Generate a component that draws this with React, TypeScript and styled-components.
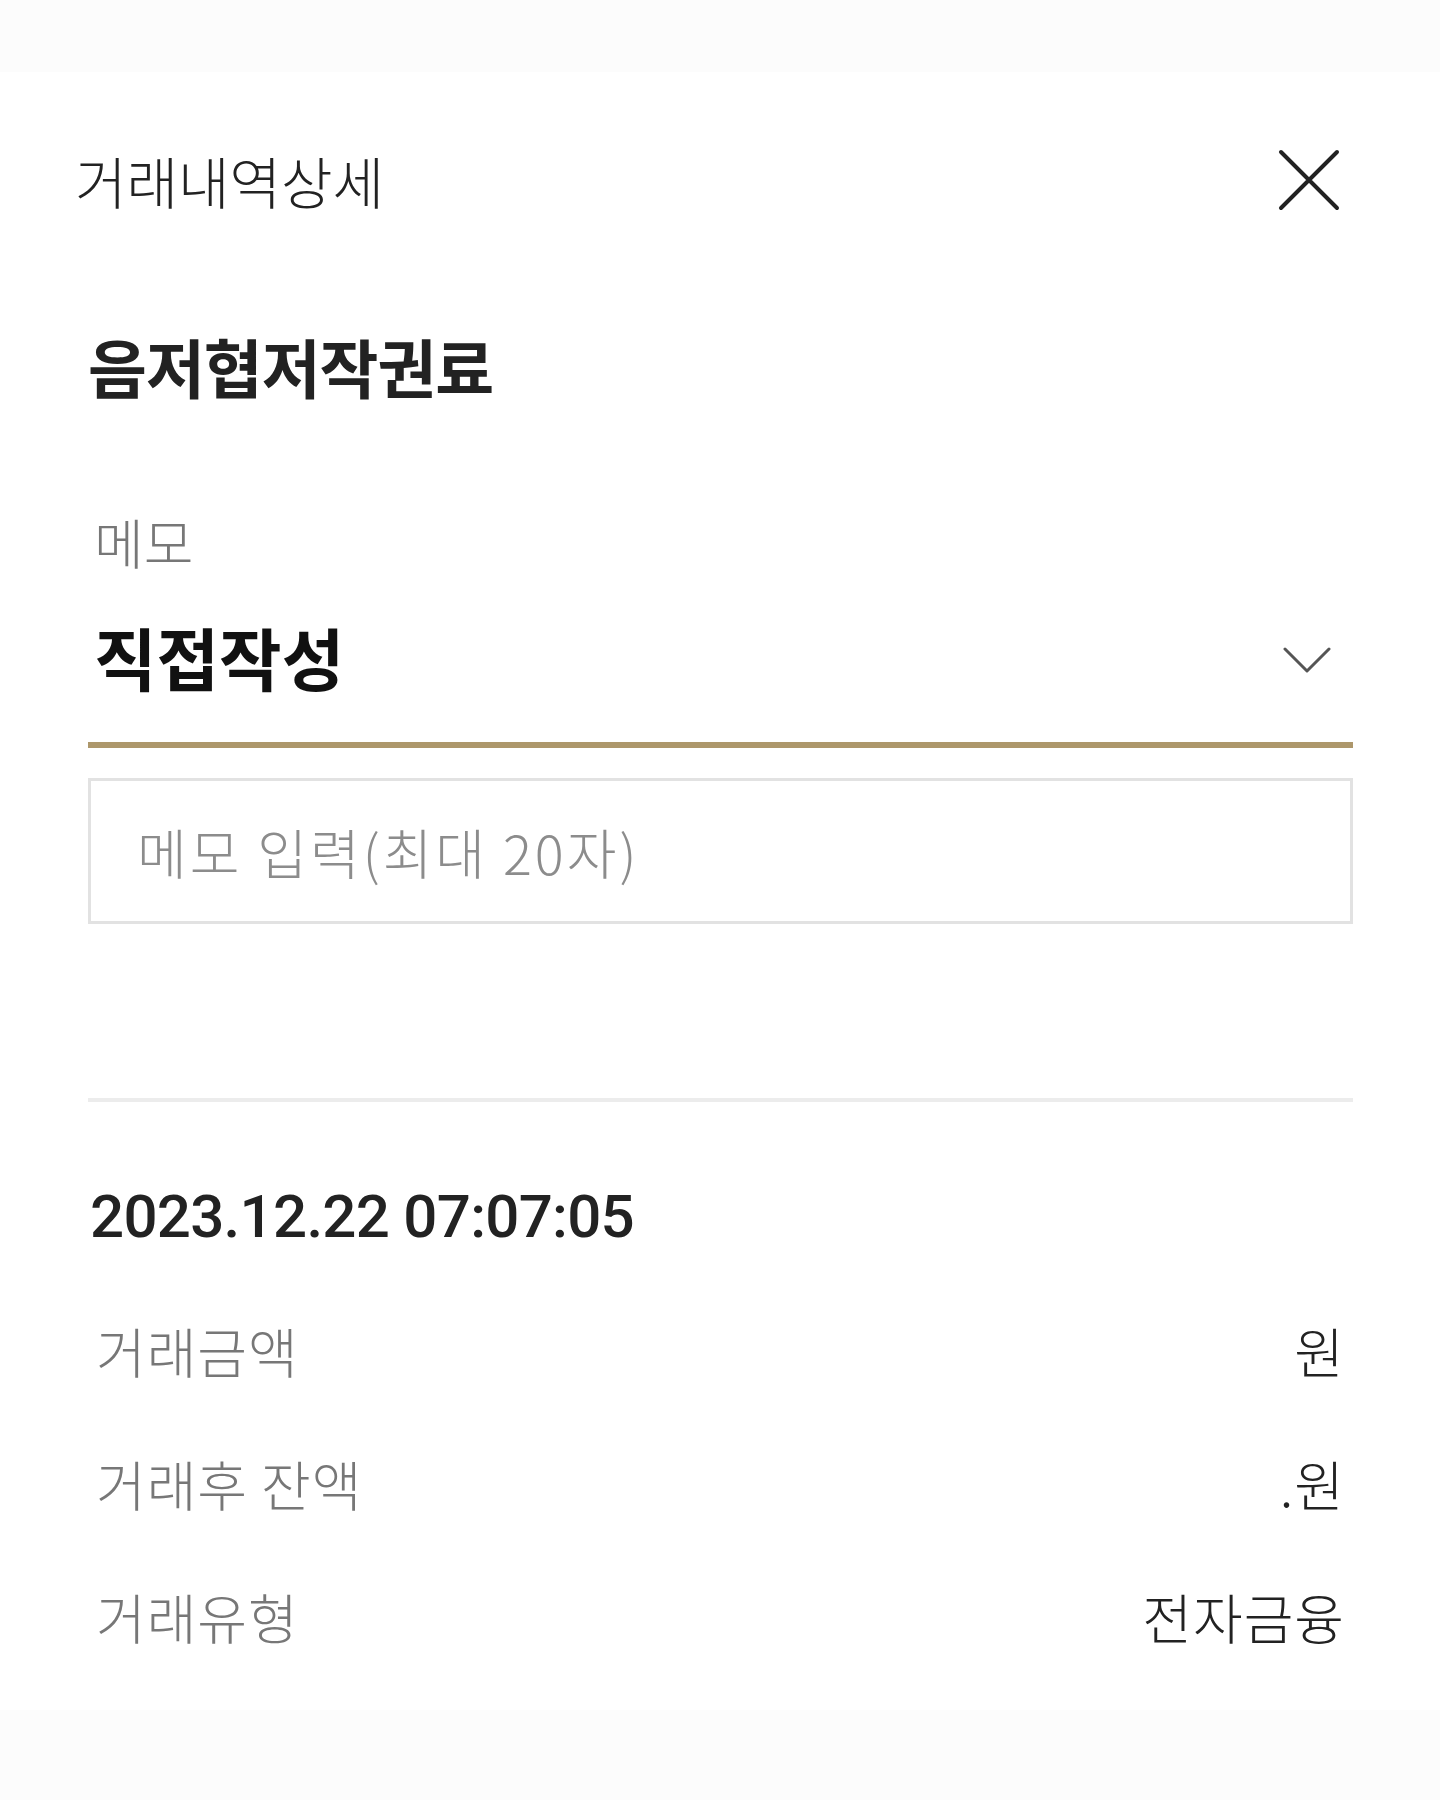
import React from "react";
import styled, { createGlobalStyle } from "styled-components";

const GlobalStyle = createGlobalStyle`
  html, body {
    margin: 0;
    padding: 0;
    background: #fcfcfc;
  }
  body {
    font-family: "Noto Sans CJK KR", "Noto Sans", sans-serif;
    color: #222;
  }
  * { box-sizing: border-box; }
`;

const Page = styled.div`
  width: 1440px;
  min-height: 1800px;
  padding-top: 72px;
  background: #fcfcfc;
`;

const Sheet = styled.div`
  background: #ffffff;
  height: 1638px;
  display: flex;
  flex-direction: column;
`;

const Header = styled.header`
  height: 216px;
  display: flex;
  align-items: center;
  justify-content: space-between;
  padding: 0 100px 0 75px;
`;

const HeaderTitle = styled.h1`
  margin: 0;
  font-size: 56px;
  font-weight: 300;
  letter-spacing: 0;
  line-height: 1;
  color: #222;
`;

const CloseButton = styled.button`
  border: 0;
  background: transparent;
  padding: 0;
  width: 62px;
  height: 62px;
  display: flex;
  align-items: center;
  justify-content: center;
  cursor: pointer;
`;

const Content = styled.main`
  padding: 0 87px 0 88px;
  display: flex;
  flex-direction: column;
`;

const Merchant = styled.h2`
  margin: 37px 0 0;
  font-size: 64px;
  font-weight: 700;
  letter-spacing: -1px;
  line-height: 80px;
  color: #222;
`;

const FieldLabel = styled.div`
  margin-top: 107px;
  padding-left: 6px;
  font-size: 54px;
  font-weight: 300;
  letter-spacing: 0;
  line-height: 60px;
  color: #777;
`;

const SelectRow = styled.div`
  height: 176px;
  display: flex;
  align-items: center;
  justify-content: space-between;
  padding: 6px 22px 0 6px;
  border-bottom: 6px solid #ad976b;
`;

const SelectValue = styled.span`
  font-size: 68px;
  font-weight: 700;
  letter-spacing: 0;
  line-height: 1;
  color: #111;
  margin-top: -6px;
`;

const MemoInput = styled.input`
  margin-top: 30px;
  height: 146px;
  width: 100%;
  border: 3px solid #e2e2e2;
  background: #fff;
  padding: 0 0 0 46px;
  font-family: "Noto Sans CJK KR", "Noto Sans", sans-serif;
  font-size: 54px;
  font-weight: 300;
  letter-spacing: 3px;
  color: #222;
  outline: none;

  &::placeholder {
    color: #8c8c8c;
  }
`;

const Divider = styled.hr`
  margin: 174px 0 0;
  border: 0;
  height: 4px;
  background: #ececec;
`;

const DateTime = styled.div`
  margin-top: 75px;
  padding-left: 2px;
  font-family: Roboto, "Liberation Sans", sans-serif;
  font-size: 60px;
  font-weight: 500;
  letter-spacing: -0.7px;
  line-height: 80px;
  color: #222;
`;

const InfoList = styled.dl`
  margin: 27px 0 0;
  display: flex;
  flex-direction: column;
`;

const InfoRow = styled.div`
  height: 133px;
  display: flex;
  align-items: center;
  justify-content: space-between;
  padding: 0 8px;
`;

const InfoLabel = styled.dt`
  margin: 0;
  font-size: 54px;
  font-weight: 300;
  letter-spacing: 1px;
  line-height: 1;
  color: #777;
`;

const InfoValue = styled.dd`
  margin: 0;
  font-size: 54px;
  font-weight: 300;
  letter-spacing: 1px;
  line-height: 1;
  color: #222;
`;

const CloseIcon = () => (
  <svg width="62" height="62" viewBox="0 0 62 62" fill="none">
    <path
      d="M3 3 L59 59 M59 3 L3 59"
      stroke="#222"
      strokeWidth="4"
      strokeLinecap="round"
    />
  </svg>
);

const ChevronDown = () => (
  <svg width="48" height="28" viewBox="0 0 48 28" fill="none">
    <path
      d="M2 3 L24 25 L46 3"
      stroke="#555"
      strokeWidth="3"
      strokeLinecap="round"
      strokeLinejoin="round"
    />
  </svg>
);

const rows: { label: string; value: string }[] = [
  { label: "거래금액", value: "원" },
  { label: "거래후 잔액", value: ".원" },
  { label: "거래유형", value: "전자금융" },
];

export default function App() {
  return (
    <>
      <GlobalStyle />
      <Page>
        <Sheet>
          <Header>
            <HeaderTitle>거래내역상세</HeaderTitle>
            <CloseButton aria-label="닫기">
              <CloseIcon />
            </CloseButton>
          </Header>
          <Content>
            <Merchant>음저협저작권료</Merchant>
            <FieldLabel>메모</FieldLabel>
            <SelectRow>
              <SelectValue>직접작성</SelectValue>
              <ChevronDown />
            </SelectRow>
            <MemoInput placeholder="메모 입력(최대 20자)" />
            <Divider />
            <DateTime>2023.12.22 07:07:05</DateTime>
            <InfoList>
              {rows.map((r) => (
                <InfoRow key={r.label}>
                  <InfoLabel>{r.label}</InfoLabel>
                  <InfoValue>{r.value}</InfoValue>
                </InfoRow>
              ))}
            </InfoList>
          </Content>
        </Sheet>
      </Page>
    </>
  );
}
